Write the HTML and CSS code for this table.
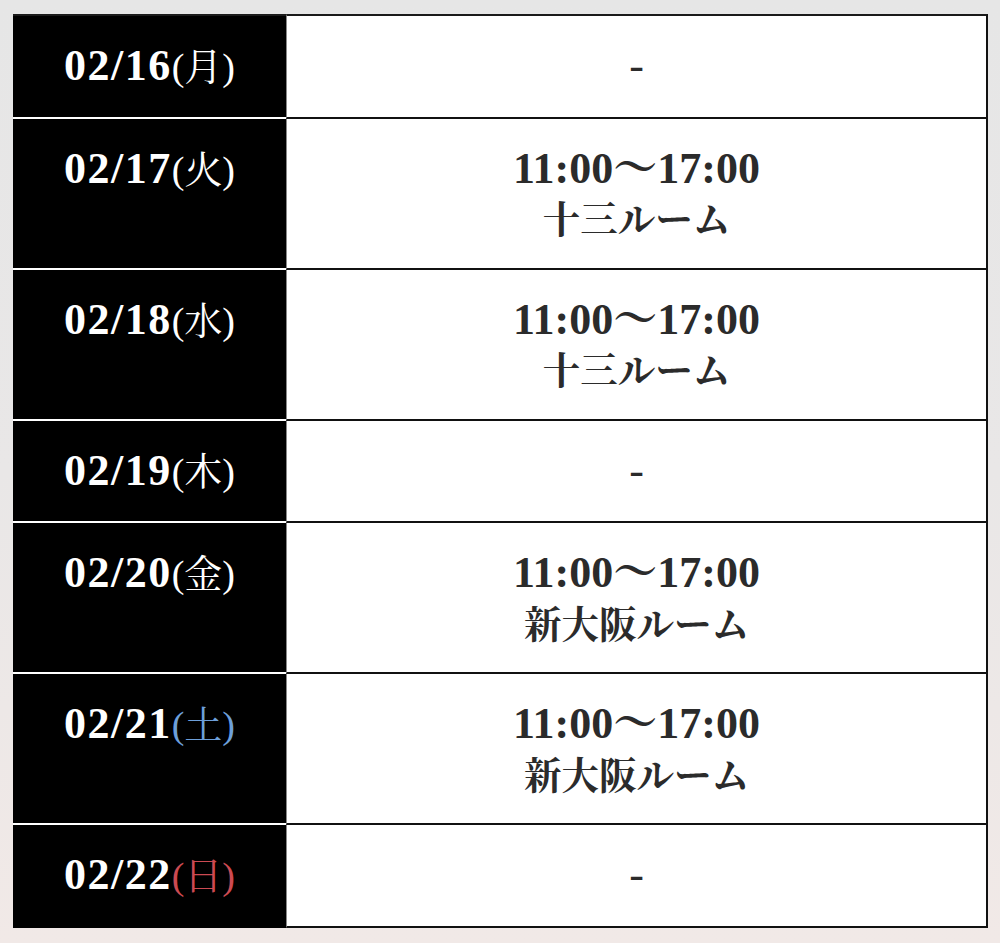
FILE: index.html
```html
<!DOCTYPE html>
<html lang="ja">
<head>
<meta charset="utf-8">
<title>スケジュール</title>
<link rel="stylesheet" href="styles.css">
</head>
<body>
<table class="schedule">
  <tbody>
    <tr>
      <td class="date">02/16<span class="day">(月)</span></td>
      <td class="time"><span class="none">-</span></td>
    </tr>
    <tr>
      <td class="date">02/17<span class="day">(火)</span></td>
      <td class="time">11:00〜17:00<br><span class="room">十三ルーム</span></td>
    </tr>
    <tr>
      <td class="date">02/18<span class="day">(水)</span></td>
      <td class="time">11:00〜17:00<br><span class="room">十三ルーム</span></td>
    </tr>
    <tr>
      <td class="date">02/19<span class="day">(木)</span></td>
      <td class="time"><span class="none">-</span></td>
    </tr>
    <tr>
      <td class="date">02/20<span class="day">(金)</span></td>
      <td class="time">11:00〜17:00<br><span class="room">新大阪ルーム</span></td>
    </tr>
    <tr>
      <td class="date">02/21<span class="day sat">(土)</span></td>
      <td class="time">11:00〜17:00<br><span class="room">新大阪ルーム</span></td>
    </tr>
    <tr>
      <td class="date">02/22<span class="day sun">(日)</span></td>
      <td class="time"><span class="none">-</span></td>
    </tr>
  </tbody>
</table>
</body>
</html>
```
FILE: styles.css
```css
html, body {
  margin: 0;
  padding: 0;
}

body {
  min-height: 943px;
  background: linear-gradient(180deg, #e6e6e6 0%, #e9e7e7 50%, #f1e9e7 100%);
  padding: 14px 0 0 13px;
  box-sizing: border-box;
  font-family: "Liberation Serif", "Noto Serif CJK JP", "Noto Sans CJK JP", serif;
}

.schedule {
  border-collapse: separate;
  border-spacing: 0;
  width: 975px;
  table-layout: fixed;
}

.schedule td {
  padding: 26px 0;
  line-height: 48.5px;
  font-size: 44px;
  font-weight: 700;
  text-align: center;
}

.date {
  width: 273px;
  background: #000;
  color: #fff;
  vertical-align: top;
  border-bottom: 2px solid #fff;
  letter-spacing: 1.5px;
}

.time {
  background: #fff;
  color: #2b2b2b;
  vertical-align: top;
  border-bottom: 2px solid #111;
  border-right: 2px solid #111;
  border-left: 1px solid #888;
}

.schedule tr:first-child td {
  border-top: 2px solid #1a1a1a;
}

.schedule tr:last-child .date {
  border-bottom-color: #000;
}

.day {
  font-size: 38px;
  line-height: 1;
  font-weight: 400;
  letter-spacing: 0;
}

.room {
  font-size: 37.5px;
  line-height: 1;
  position: relative;
  top: 2px;
}

.sat {
  color: #6d9fda;
}

.sun {
  color: #cc4a52;
}

.none {
  font-weight: 400;
}
```
